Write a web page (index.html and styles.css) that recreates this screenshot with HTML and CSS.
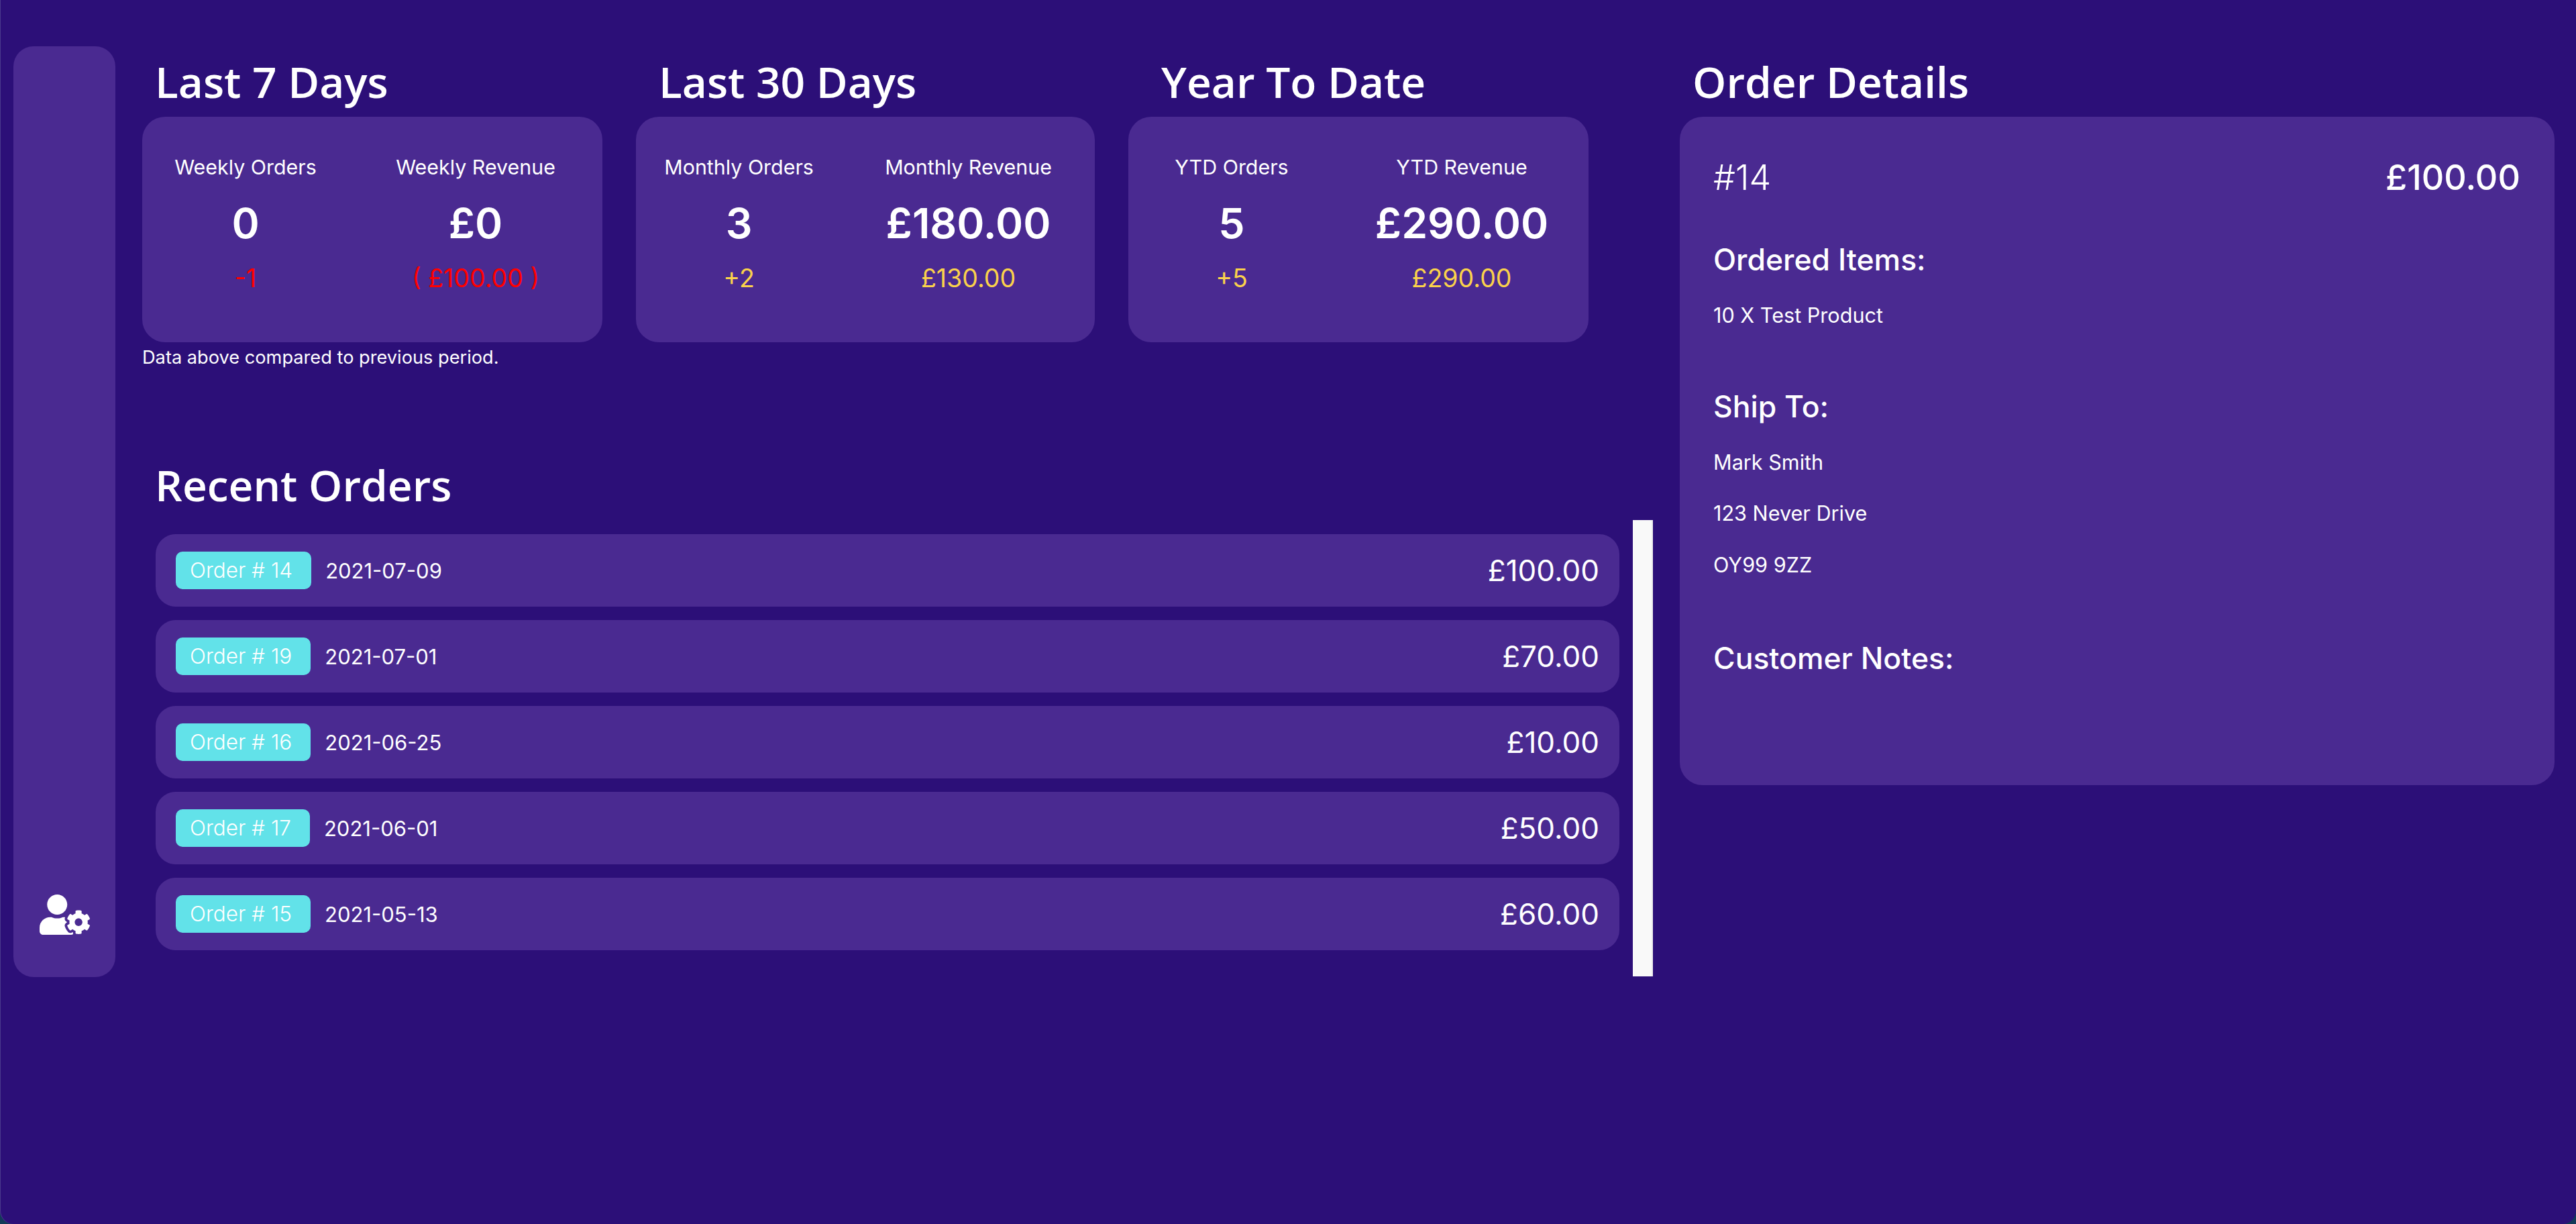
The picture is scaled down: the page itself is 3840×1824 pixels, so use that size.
FILE: index.html
```html
<!DOCTYPE html>
<html lang="en">
<head>
    <meta charset="UTF-8">
    <meta name="viewport" content="width=device-width, initial-scale=1.0">
    <title>Dashboard</title>
    <link rel="stylesheet" href="styles.css">
</head>
<body>
    <div class="window">
        <aside class="sidebar">
            <svg class="sidebar-icon" viewBox="0 0 640 512" aria-label="Account settings">
                <path fill="currentColor" d="M610.5 373.3c2.6-14.1 2.6-28.5 0-42.6l25.8-14.9c3-1.7 4.3-5.2 3.3-8.5-6.7-21.6-18.2-41.2-33.2-57.4-2.3-2.5-6-3.1-9-1.4l-25.8 14.9c-10.9-9.3-23.4-16.5-36.9-21.3v-29.8c0-3.4-2.4-6.4-5.7-7.1-22.3-5-45-4.8-66.2 0-3.3.7-5.7 3.7-5.7 7.1v29.8c-13.5 4.8-26 12-36.9 21.3l-25.8-14.9c-2.9-1.7-6.7-1.1-9 1.4-15 16.2-26.5 35.8-33.2 57.4-1 3.3.4 6.8 3.3 8.5l25.8 14.9c-2.6 14.1-2.6 28.5 0 42.6l-25.8 14.9c-3 1.7-4.3 5.2-3.3 8.5 6.7 21.6 18.2 41.1 33.2 57.4 2.3 2.5 6 3.1 9 1.4l25.8-14.9c10.9 9.3 23.4 16.5 36.9 21.3v29.8c0 3.4 2.4 6.4 5.7 7.1 22.3 5 45 4.8 66.2 0 3.3-.7 5.7-3.7 5.7-7.1v-29.8c13.5-4.8 26-12 36.9-21.3l25.8 14.9c2.9 1.7 6.7 1.1 9-1.4 15-16.2 26.5-35.8 33.2-57.4 1-3.3-.4-6.8-3.3-8.5l-25.8-14.9zM496 400.5c-26.8 0-48.5-21.8-48.5-48.5s21.8-48.5 48.5-48.5 48.5 21.8 48.5 48.5-21.7 48.5-48.5 48.5zM224 256c70.7 0 128-57.3 128-128S294.7 0 224 0 96 57.3 96 128s57.3 128 128 128zm201.2 226.5c-2.3-1.2-4.6-2.6-6.8-3.9l-7.9 4.6c-6 3.4-12.8 5.3-19.6 5.3-10.9 0-21.4-4.6-28.9-12.6-18.3-19.8-32.3-43.9-40.2-69.6-5.5-17.7 1.9-36.4 17.9-45.7l7.9-4.6c-.1-2.6-.1-5.2 0-7.8l-7.9-4.6c-16-9.2-23.4-28-17.9-45.7.9-2.9 2.2-5.8 3.2-8.7-3.8-.3-7.5-1.2-11.4-1.2h-16.7c-22.2 10.2-46.9 16-72.9 16s-50.6-5.8-72.9-16h-16.7C60.2 288 0 348.2 0 422.4V464c0 26.5 21.5 48 48 48h352c10.1 0 19.5-3.2 27.2-8.5-1.2-3.8-2-7.7-2-11.8v-9.2z"/>
            </svg>
        </aside>

        <main class="dashboard">
            <div class="stat-titles">
                <h2 class="section-title">Last 7 Days</h2>
                <h2 class="section-title">Last 30 Days</h2>
                <h2 class="section-title">Year To Date</h2>
            </div>

            <div class="stat-cards">
                <div class="card stat-card">
                    <div class="stat-label">Weekly Orders</div>
                    <div class="stat-label">Weekly Revenue</div>
                    <div class="stat-value">0</div>
                    <div class="stat-value">£0</div>
                    <div class="stat-change down">-1</div>
                    <div class="stat-change down">( £100.00 )</div>
                </div>
                <div class="card stat-card">
                    <div class="stat-label">Monthly Orders</div>
                    <div class="stat-label">Monthly Revenue</div>
                    <div class="stat-value">3</div>
                    <div class="stat-value">£180.00</div>
                    <div class="stat-change up">+2</div>
                    <div class="stat-change up">£130.00</div>
                </div>
                <div class="card stat-card">
                    <div class="stat-label">YTD Orders</div>
                    <div class="stat-label">YTD Revenue</div>
                    <div class="stat-value">5</div>
                    <div class="stat-value">£290.00</div>
                    <div class="stat-change up">+5</div>
                    <div class="stat-change up">£290.00</div>
                </div>
            </div>

            <p class="stat-note">Data above compared to previous period.</p>

            <h2 class="section-title recent-title">Recent Orders</h2>

            <div class="recent-scroll">
                <div class="order-list">
                    <div class="order-row">
                        <span class="order-tag">Order # 14</span>
                        <span class="order-date">2021-07-09</span>
                        <span class="order-total">£100.00</span>
                    </div>
                    <div class="order-row">
                        <span class="order-tag">Order # 19</span>
                        <span class="order-date">2021-07-01</span>
                        <span class="order-total">£70.00</span>
                    </div>
                    <div class="order-row">
                        <span class="order-tag">Order # 16</span>
                        <span class="order-date">2021-06-25</span>
                        <span class="order-total">£10.00</span>
                    </div>
                    <div class="order-row">
                        <span class="order-tag">Order # 17</span>
                        <span class="order-date">2021-06-01</span>
                        <span class="order-total">£50.00</span>
                    </div>
                    <div class="order-row">
                        <span class="order-tag">Order # 15</span>
                        <span class="order-date">2021-05-13</span>
                        <span class="order-total">£60.00</span>
                    </div>
                </div>
                <div class="scroll-track"></div>
            </div>
        </main>

        <section class="details">
            <h2 class="section-title details-title">Order Details</h2>
            <div class="card details-card">
                <div class="details-head">
                    <span class="details-id">#14</span>
                    <span class="details-total">£100.00</span>
                </div>
                <h3 class="details-heading">Ordered Items:</h3>
                <p class="details-line">10 X Test Product</p>
                <h3 class="details-heading ship">Ship To:</h3>
                <p class="details-line">Mark Smith</p>
                <p class="details-line">123 Never Drive</p>
                <p class="details-line">OY99 9ZZ</p>
                <h3 class="details-heading notes">Customer Notes:</h3>
            </div>
        </section>
    </div>
</body>
</html>
```

FILE: styles.css
```css
:root {
    --bg: #2c0f78;
    --panel: #4a2a91;
    --tag: #62e2e9;
    --up: #fad24b;
    --down: #ff0000;
    --white: #ffffff;
}

* {
    margin: 0;
    padding: 0;
    box-sizing: border-box;
}

html, body {
    height: 100%;
}

body {
    background: #123a58;
    font-family: 'Inter', 'Liberation Sans', sans-serif;
    color: var(--white);
    overflow: hidden;
}

.window {
    height: 1824px;
    display: flex;
    align-items: flex-start;
    padding: 69px 32px 0 20px;
    background: var(--bg);
    border-radius: 0 0 20px 20px;
    box-shadow: inset 1px 0 0 #4b3a8c;
}

.card {
    background: var(--panel);
    border-radius: 34px;
}

.sidebar {
    flex: none;
    width: 152px;
    height: 1387px;
    display: flex;
    flex-direction: column;
    justify-content: flex-end;
    align-items: center;
    padding-bottom: 63px;
    background: var(--panel);
    border-radius: 30px;
}

.sidebar-icon {
    width: 75px;
    height: 60px;
    color: var(--white);
}

.dashboard {
    flex: none;
    width: 2252px;
    margin-left: 40px;
}

.section-title {
    font-family: 'Open Sans', 'Noto Sans', sans-serif;
    font-size: 64px;
    font-weight: 600;
    line-height: 105px;
    white-space: nowrap;
}

.stat-titles {
    display: grid;
    grid-template-columns: 751px 749px 1fr;
    padding-left: 19px;
}

.stat-cards {
    display: grid;
    grid-template-columns: 686px 684px 686px;
    gap: 50px;
}

.stat-card {
    height: 336px;
    display: grid;
    grid-template-columns: 308fr 378fr;
    grid-template-rows: 78px 88px 76px;
    align-content: start;
    padding-top: 36px;
    text-align: center;
    justify-items: center;
    align-items: center;
}

.stat-label {
    font-size: 30.4px;
}

.stat-value {
    font-size: 62.5px;
    font-weight: 600;
}

.stat-change {
    font-size: 37.5px;
    font-weight: 400;
}

.stat-change.up {
    color: var(--up);
}

.stat-change.down {
    color: var(--down);
}

.stat-note {
    font-size: 27.2px;
    line-height: 40px;
    margin-top: 3px;
}

.recent-title {
    padding-left: 19px;
    margin-top: 117px;
}

.recent-scroll {
    display: flex;
    height: 680px;
}

.order-list {
    flex: none;
    width: 2182px;
    margin-left: 20px;
    padding-top: 21px;
    display: flex;
    flex-direction: column;
    gap: 20px;
}

.order-row {
    height: 108px;
    display: flex;
    align-items: center;
    padding: 0 30px;
    background: var(--panel);
    border-radius: 30px;
}

.order-tag {
    height: 56px;
    line-height: 56px;
    padding: 0 28px 0 21px;
    font-size: 31.5px;
    font-weight: 300;
    background: var(--tag);
    border-radius: 10px;
}

.order-date {
    margin-left: 21px;
    font-size: 31px;
}

.order-total {
    margin-left: auto;
    font-size: 44px;
    font-weight: 400;
}

.scroll-track {
    flex: none;
    width: 30px;
    margin-left: 20px;
    background: #f9f9f9;
    border-right: 2px solid #ececec;
}

.details {
    flex: none;
    width: 1304px;
    margin-left: 40px;
}

.details-title {
    padding-left: 19px;
}

.details-card {
    height: 996px;
    padding: 0 51px 0 50px;
}

.details-head {
    display: flex;
    justify-content: space-between;
    align-items: center;
    height: 180px;
}

.details-id {
    font-size: 52px;
    font-weight: 300;
}

.details-total {
    font-size: 52px;
    font-weight: 500;
}

.details-heading {
    font-size: 44.5px;
    font-weight: 500;
    line-height: 66px;
}

.details-heading.ship {
    margin-top: 64px;
}

.details-heading.notes {
    margin-top: 68px;
}

.details-line {
    font-size: 30.6px;
    line-height: 76.5px;
}

.details-heading + .details-line {
    margin-top: 12px;
}
```
